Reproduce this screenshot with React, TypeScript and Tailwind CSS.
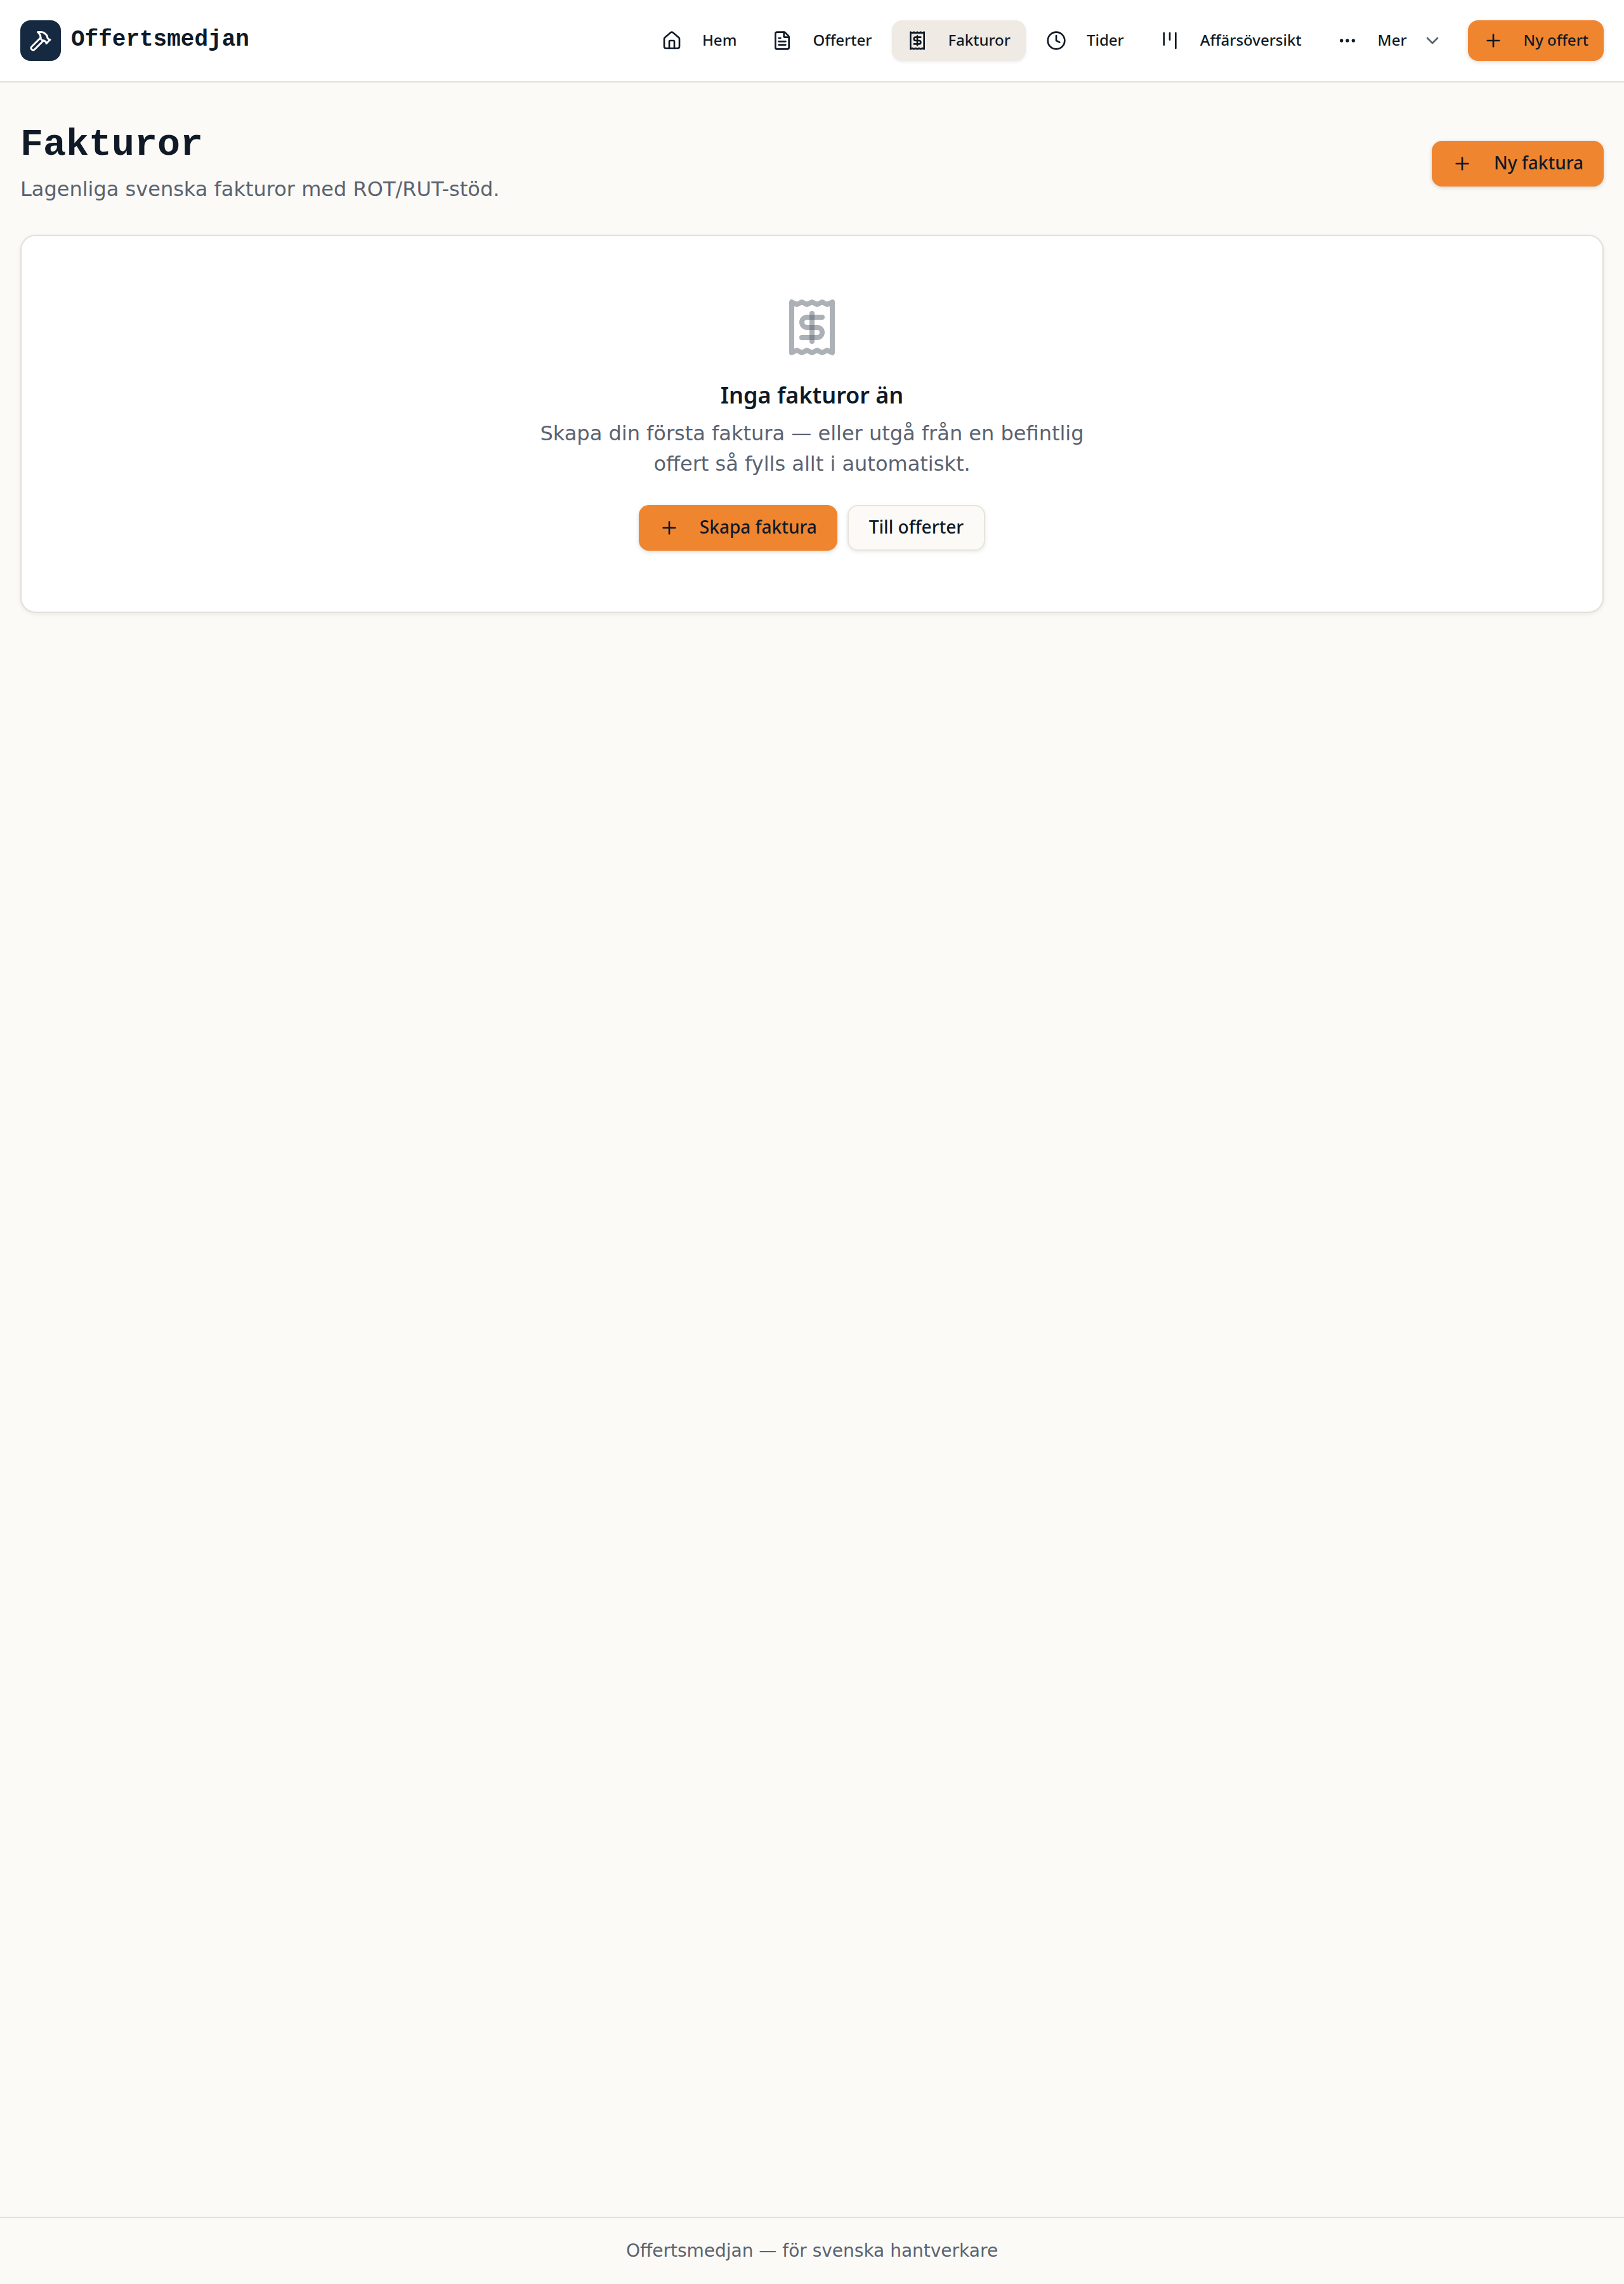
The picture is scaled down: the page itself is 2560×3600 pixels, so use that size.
import React from "react";
import { Home, FileText, Receipt, Clock, Kanban, Ellipsis, ChevronDown, Plus, Hammer } from "lucide-react";

const nav = [
  { label: "Hem", icon: Home },
  { label: "Offerter", icon: FileText },
  { label: "Fakturor", icon: Receipt, active: true },
  { label: "Tider", icon: Clock },
  { label: "Affärsöversikt", icon: Kanban },
];

export default function App() {
  return (
    <div className="min-h-[3600px] flex flex-col bg-[#fbfaf6] text-[#0f1a26] font-['DejaVu_Sans',sans-serif]">
      <header className="h-[130px] shrink-0 bg-white border-b-2 border-[#e2e0d8] px-8 flex items-center justify-between">
        <div className="flex items-center gap-4">
          <div className="w-16 h-16 rounded-2xl bg-[#152a40] flex items-center justify-center text-white">
            <Hammer className="w-9 h-9" />
          </div>
          <span className="font-['Liberation_Mono',monospace] font-bold text-[36px] leading-[48px] relative -top-px">Offertsmedjan</span>
        </div>
        <nav className="flex items-center gap-2 font-['Noto_Sans',sans-serif] text-[24px] font-medium">
          {nav.map((n) => (
            <a key={n.label} className={`h-16 px-6 flex items-center gap-8 rounded-2xl ${n.active ? "bg-[#efeae4] shadow-[0_2px_4px_rgba(15,26,38,0.08)]" : ""}`}>
              <n.icon className="w-8 h-8" />
              <span className="relative -top-px">{n.label}</span>
            </a>
          ))}
          <a className="h-16 pl-6 pr-6 flex items-center gap-8 rounded-2xl">
            <Ellipsis className="w-8 h-8" />
            <span className="relative -top-px">Mer</span>
            <ChevronDown className="w-8 h-8 -ml-2 text-[#5a6370]" />
          </a>
          <a className="h-16 ml-2 px-6 flex items-center gap-8 rounded-2xl bg-[#f08530] shadow-[0_2px_6px_rgba(15,26,38,0.16)]">
            <Plus className="w-8 h-8" />
            <span className="relative -top-px">Ny offert</span>
          </a>
        </nav>
      </header>

      <main className="flex-1 px-8 pt-[64px]">
        <div className="flex items-center justify-between">
          <div>
            <h1 className="font-['Liberation_Mono',monospace] font-bold text-[60px] leading-[72px] relative -top-[2px]">Fakturor</h1>
            <p className="text-[32px] leading-[48px] text-[#5a6370] mt-2">Lagenliga svenska fakturor med ROT/RUT-stöd.</p>
          </div>
          <a className="h-[72px] px-8 flex items-center gap-[34px] rounded-2xl bg-[#f08530] shadow-[0_2px_6px_rgba(15,26,38,0.16)] font-['Noto_Sans',sans-serif] text-[28px] font-medium">
            <Plus className="w-8 h-8" />
            <span className="relative -top-[2px]">Ny faktura</span>
          </a>
        </div>

        <section className="mt-[48px] h-[596px] bg-white rounded-[24px] border-2 border-[#e2e0d8] shadow-[0_2px_6px_rgba(15,26,38,0.08)] flex flex-col items-center pt-[96px]">
          <Receipt className="w-24 h-24 text-[#5a6370]/50" />
          <h2 className="mt-[31px] font-['Noto_Sans',sans-serif] font-semibold text-[36px] leading-[56px]">Inga fakturor än</h2>
          <p className="mt-2 w-[896px] text-center text-[32px] leading-[48px] text-[#5a6370]">Skapa din första faktura — eller utgå från en befintlig offert så fylls allt i automatiskt.</p>
          <div className="mt-[41px] flex items-center gap-4 font-['Noto_Sans',sans-serif] text-[28px] font-medium">
            <a className="h-[72px] px-8 flex items-center gap-8 rounded-2xl bg-[#f08530] shadow-[0_2px_6px_rgba(15,26,38,0.16)]">
              <Plus className="w-8 h-8" />
              <span className="relative -top-[2px]">Skapa faktura</span>
            </a>
            <a className="h-[72px] px-8 flex items-center rounded-2xl bg-[#fbfaf6] border-2 border-[#e8e4dc] shadow-[0_2px_6px_rgba(15,26,38,0.1)]">
              <span className="relative -top-[2px]">Till offerter</span>
            </a>
          </div>
        </section>
      </main>

      <footer className="h-[106px] shrink-0 border-t-2 border-[#e2e0d8] flex items-center justify-center text-[28px] text-[#5a6370]">
        Offertsmedjan — för svenska hantverkare
      </footer>
    </div>
  );
}
